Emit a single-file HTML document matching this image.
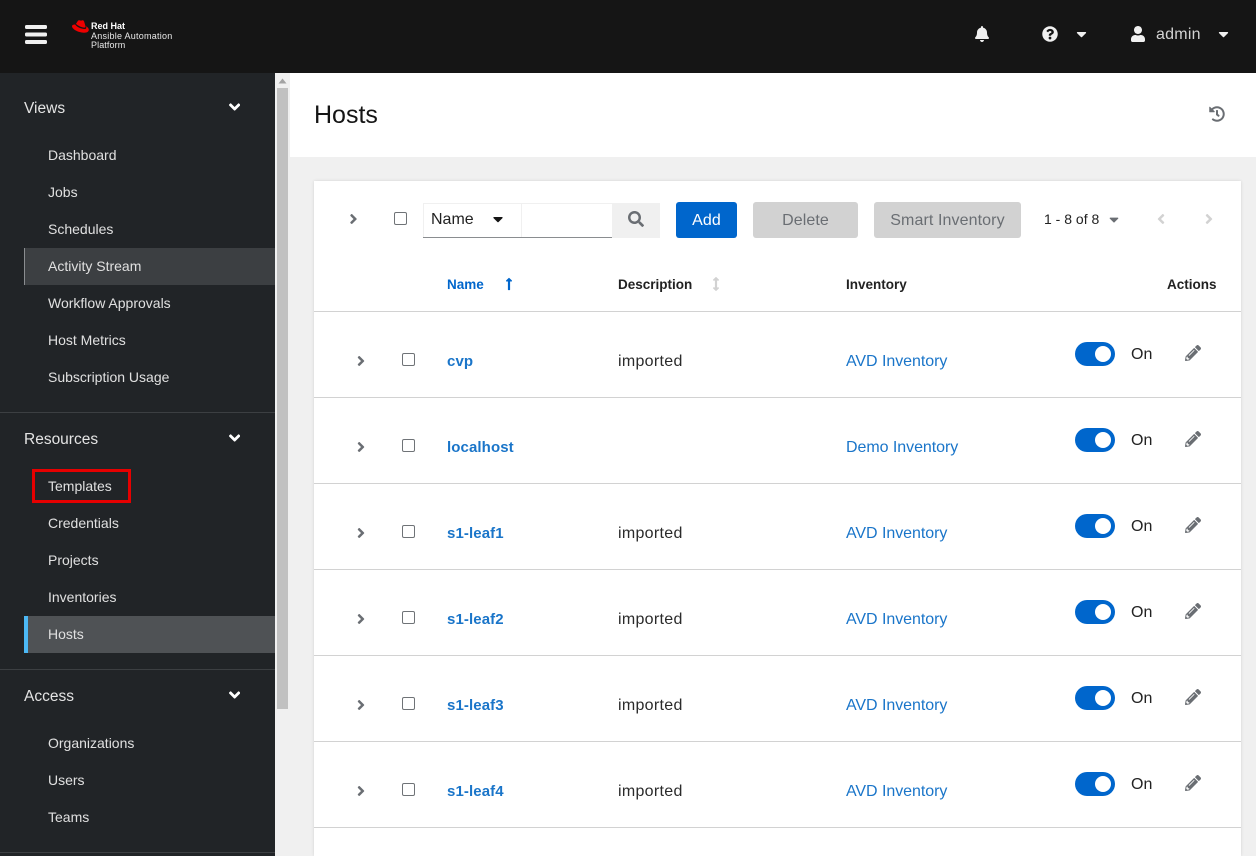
<!DOCTYPE html>
<html lang="en"><head><meta charset="utf-8"><title>Hosts</title>
<style>
html,body{margin:0;padding:0;width:1256px;height:856px;overflow:hidden;background:#f0f0f0}
body{position:relative;font-family:"Liberation Sans",sans-serif;color:#151515}
div,span,a,svg{position:absolute}
.t{white-space:nowrap;height:20px;line-height:20px}
.b{background:#fff}
.n{left:48px;color:#e0e0e0;font-size:14px}
.h{left:24px;color:#e4e4e4;font-size:15.5px}
.hr{left:0;width:275px;height:1px;background:#3c3f42}
.cv{left:229px;width:11.25px;height:18px;fill:#fff}
.row{left:314px;width:927px;height:1px;background:#d2d2d2}
.link{color:#1a75c9;text-decoration:none}
.nm{left:447px;font-size:15px;font-weight:bold;letter-spacing:.1px}
.de{left:618px;font-size:16px;color:#2b2b2b;letter-spacing:.3px}
.in{left:846px;font-size:16px;letter-spacing:-.05px}
.on{left:1131px;font-size:16px;color:#222}
.cb{width:11px;height:11px;border:1px solid #6f7377;border-radius:2px;background:#fff}
.tg{left:1075px;width:40px;height:24px;border-radius:12px;background:#06c}
.tg i{position:absolute;left:20px;top:4px;width:16px;height:16px;border-radius:50%;background:#fff}
.ic{fill:#6a6e73}
.btn{height:36px;top:202px;border-radius:3px;text-align:center;line-height:37px;font-size:16px;letter-spacing:.1px}
.dis{background:#d2d2d2;color:#6a6e73}
.th{top:275px;font-size:13.5px;font-weight:bold;color:#222}
</style></head><body>
<svg width="0" height="0" style="left:0;top:0"><defs>
<symbol id="ar" viewBox="0 0 256 512"><path d="M224.3 273l-136 136c-9.4 9.4-24.6 9.4-33.9 0l-22.6-22.6c-9.4-9.4-9.4-24.6 0-33.9l96.4-96.4-96.4-96.4c-9.4-9.4-9.4-24.6 0-33.9L54.3 103c9.4-9.4 24.6-9.4 33.9 0l136 136c9.5 9.4 9.5 24.6.1 34z"/></symbol>
<symbol id="al" viewBox="0 0 256 512"><path d="M31.7 239l136-136c9.4-9.4 24.6-9.4 33.9 0l22.6 22.6c9.4 9.4 9.4 24.6 0 33.9L127.9 256l96.4 96.4c9.4 9.4 9.4 24.6 0 33.9L201.7 409c-9.4 9.4-24.6 9.4-33.9 0l-136-136c-9.5-9.4-9.5-24.6-.1-34z"/></symbol>
<symbol id="ad" viewBox="0 0 320 512"><path d="M143 352.3L7 216.3c-9.4-9.4-9.4-24.6 0-33.9l22.6-22.6c9.4-9.4 24.6-9.4 33.9 0l96.4 96.4 96.4-96.4c9.4-9.4 24.6-9.4 33.9 0l22.6 22.6c9.4 9.4 9.4 24.6 0 33.9l-136 136c-9.2 9.4-24.4 9.4-33.8 0z"/></symbol>
<symbol id="cd" viewBox="0 0 320 512"><path d="M31.3 192h257.3c17.8 0 26.7 21.5 14.1 34.1L174.1 354.8c-7.8 7.8-20.5 7.8-28.3 0L17.2 226.1C4.6 213.5 13.5 192 31.3 192z"/></symbol>
<symbol id="pe" viewBox="0 0 512 512"><path d="M497.9 142.1l-46.1 46.1c-4.7 4.7-12.3 4.7-17 0l-111-111c-4.7-4.7-4.7-12.3 0-17l46.1-46.1c18.7-18.7 49.1-18.7 67.9 0l60.1 60.1c18.8 18.7 18.8 49.1 0 67.9zM284.2 99.8L21.6 362.4.4 483.9c-2.9 16.4 11.4 30.6 27.8 27.8l121.5-21.3 262.6-262.6c4.7-4.7 4.7-12.3 0-17l-111-111c-4.8-4.7-12.4-4.7-17.1 0zM124.1 339.9c-5.5-5.5-5.5-14.3 0-19.8l154-154c5.5-5.5 14.3-5.5 19.8 0s5.5 14.3 0 19.8l-154 154c-5.5 5.5-14.3 5.5-19.8 0zM88 424h48v36.3l-64.5 11.3-31.1-31.1L51.7 376H88v48z"/></symbol>
</defs></svg>

<!-- top bar -->
<div style="left:0;top:0;width:1256px;height:73px;background:#151515"></div>
<svg style="left:25px;top:25px" width="22" height="19" fill="#f0f0f0"><rect width="22" height="4" y="0" rx="1.5"/><rect width="22" height="4" y="7.5" rx="1.5"/><rect width="22" height="4" y="15" rx="1.5"/></svg>
<svg style="left:72px;top:19px" width="17" height="14" viewBox="0 0 17 14" fill="#e00"><path d="M4 4.800C5.500 6.800 10 8.700 12.500 8.600 13.800 8.600 13.600 7.500 13.300 6.500L12.100 2.500C11.600 1 10.500 .9 9 1.700 7.500 .9 6 1 5.500 2.500z"/><path d="M3.200 5.500C1.500 5.500 0 6 0 7.300 0 10 6 13.700 12 13.700 15.400 13.700 16.800 12.300 16.800 10.700 16.800 9.300 15.700 8 14 7.200 14.500 8.500 14.500 10 12.800 10 9.500 10 4.500 8 3.200 5.500z"/></svg>
<span class="t" style="left:91px;top:16px;font-size:9px;font-weight:bold;color:#fff">Red Hat</span>
<span class="t" style="left:91px;top:26px;font-size:9px;color:#e8e8e8;letter-spacing:.25px">Ansible Automation</span>
<span class="t" style="left:91px;top:35px;font-size:9px;color:#e8e8e8;letter-spacing:.1px">Platform</span>
<svg style="left:975px;top:26px" width="14" height="16" viewBox="0 0 448 512" fill="#f0f0f0"><path d="M224 512c35.32 0 63.97-28.65 63.97-64H160.03c0 35.35 28.65 64 63.97 64zm215.39-149.71c-19.32-20.76-55.47-51.99-55.47-154.29 0-77.7-54.48-139.9-127.94-155.16V32c0-17.67-14.32-32-31.98-32s-31.98 14.33-31.98 32v20.84C118.56 68.1 64.08 130.3 64.08 208c0 102.3-36.15 133.53-55.47 154.29-6 6.45-8.66 14.16-8.61 21.71.11 16.4 12.98 32 32.1 32h383.8c19.12 0 32-15.6 32.1-32 .05-7.55-2.61-15.27-8.61-21.71z"/></svg>
<svg style="left:1042px;top:26px" width="16" height="16" viewBox="0 0 512 512" fill="#f0f0f0"><path d="M504 256c0 136.997-111.043 248-248 248S8 392.997 8 256C8 119.083 119.043 8 256 8s248 111.083 248 248zM262.655 90c-54.497 0-89.255 22.957-116.549 63.758-3.536 5.286-2.353 12.415 2.715 16.258l34.699 26.31c5.205 3.947 12.621 3.008 16.665-2.122 17.864-22.658 30.113-35.797 57.303-35.797 20.429 0 45.698 13.148 45.698 32.958 0 14.976-12.363 22.667-32.534 33.976C247.128 238.528 216 254.941 216 296v4c0 6.627 5.373 12 12 12h56c6.627 0 12-5.373 12-12v-1.333c0-28.462 83.186-29.647 83.186-106.667 0-58.002-60.165-102-116.531-102zM256 338c-25.365 0-46 20.635-46 46 0 25.364 20.635 46 46 46s46-20.636 46-46c0-25.365-20.635-46-46-46z"/></svg>
<svg style="left:1076px;top:26px" width="11" height="16" fill="#f0f0f0"><use href="#cd"/></svg>
<svg style="left:1131px;top:26px" width="14" height="16" viewBox="0 0 448 512" fill="#f0f0f0"><path d="M224 256c70.7 0 128-57.3 128-128S294.7 0 224 0 96 57.3 96 128s57.3 128 128 128zm89.600 32h-16.700c-22.200 10.200-46.900 16-72.900 16s-50.600-5.800-72.900-16h-16.700C60.200 288 0 348.200 0 422.400V464c0 26.500 21.500 48 48 48h352c26.500 0 48-21.500 48-48v-41.600c0-74.200-60.200-134.400-134.400-134.400z"/></svg>
<span class="t" style="left:1156px;top:25px;font-size:16px;color:#d2d2d2;letter-spacing:.25px">admin</span>
<svg style="left:1218px;top:26px" width="11" height="16" fill="#f0f0f0"><use href="#cd"/></svg>

<!-- sidebar -->
<div style="left:0;top:73px;width:275px;height:783px;background:#212427"></div>
<div style="left:277px;top:88px;width:11px;height:621px;background:#c1c1c1"></div>
<svg style="left:277px;top:76px" width="11" height="10"><path d="M5.500 2.500L9.500 7.500H1.500z" fill="#a3a3a3"/></svg>
<span class="t h" style="top:99px">Views</span>
<svg class="cv" style="top:98px"><use href="#ad"/></svg>
<span class="t n" style="top:145px">Dashboard</span>
<span class="t n" style="top:182px">Jobs</span>
<span class="t n" style="top:219px">Schedules</span>
<div style="left:24px;top:248px;width:251px;height:37px;background:#3c3f42"></div>
<div style="left:24px;top:248px;width:1px;height:37px;background:#8a8d90"></div>
<span class="t n" style="top:256px">Activity Stream</span>
<span class="t n" style="top:293px">Workflow Approvals</span>
<span class="t n" style="top:330px">Host Metrics</span>
<span class="t n" style="top:367px">Subscription Usage</span>
<div class="hr" style="top:412px"></div>
<span class="t h" style="top:430px">Resources</span>
<svg class="cv" style="top:429px"><use href="#ad"/></svg>
<span class="t n" style="top:476px">Templates</span>
<div style="left:32px;top:469px;width:93px;height:28px;border:3px solid #e60000"></div>
<span class="t n" style="top:513px">Credentials</span>
<span class="t n" style="top:550px">Projects</span>
<span class="t n" style="top:587px">Inventories</span>
<div style="left:24px;top:616px;width:251px;height:37px;background:#4f5255"></div>
<div style="left:24px;top:616px;width:4px;height:37px;background:#4cb8f5"></div>
<span class="t n" style="top:624px">Hosts</span>
<div class="hr" style="top:669px"></div>
<span class="t h" style="top:687px">Access</span>
<svg class="cv" style="top:686px"><use href="#ad"/></svg>
<span class="t n" style="top:733px">Organizations</span>
<span class="t n" style="top:770px">Users</span>
<span class="t n" style="top:807px">Teams</span>
<div class="hr" style="top:852px"></div>

<!-- header -->
<div class="b" style="left:290px;top:73px;width:966px;height:84px"></div>
<span class="t" style="left:314px;top:101px;height:28px;line-height:28px;font-size:25px">Hosts</span>
<svg style="left:1209px;top:106px" width="16" height="16" viewBox="0 0 512 512" fill="#6a6e73"><path d="M504 255.531c.253 136.64-111.18 248.372-247.82 248.468-59.015.042-113.223-20.53-155.822-54.911-11.077-8.94-11.905-25.541-1.839-35.607l11.267-11.267c8.609-8.609 22.353-9.551 31.891-1.984C173.062 425.135 212.781 440 256 440c101.705 0 184-82.311 184-184 0-101.705-82.311-184-184-184-48.814 0-93.149 18.969-126.068 49.932l50.754 50.754c10.08 10.08 2.941 27.314-11.313 27.314H24c-8.837 0-16-7.163-16-16V38.627c0-14.254 17.234-21.393 27.314-11.314l49.372 49.372C129.209 34.136 189.552 8 256 8c136.81 0 247.747 110.78 248 247.531zm-180.912 78.784l9.823-12.63c8.138-10.463 6.253-25.542-4.21-33.679L288 256.349V152c0-13.255-10.745-24-24-24h-16c-13.255 0-24 10.745-24 24v135.651l65.409 50.874c10.463 8.137 25.541 6.253 33.679-4.21z"/></svg>

<!-- card -->
<div class="b" style="left:314px;top:181px;width:927px;height:675px;box-shadow:0 0 3px rgba(3,3,3,.12)"></div>
<svg class="ic" style="left:349px;top:211px" width="9" height="16"><use href="#ar"/></svg>
<div class="cb" style="left:394px;top:212px"></div>
<div style="left:423px;top:203px;width:99px;height:34px;border:solid #f0f0f0;border-width:1px 1px 0 1px;box-sizing:border-box"></div>
<div style="left:423px;top:237px;width:189px;height:1px;background:#8a8d90"></div>
<div style="left:521px;top:203px;width:91px;height:1px;background:#f0f0f0"></div>
<span class="t" style="left:431px;top:210px;font-size:16px;color:#222">Name</span>
<svg style="left:492px;top:211px" width="12" height="16" fill="#151515"><use href="#cd"/></svg>
<div style="left:612px;top:203px;width:48px;height:35px;background:#f0f0f0"></div>
<svg style="left:628px;top:211px" width="16" height="16" viewBox="0 0 512 512" fill="#6a6e73"><path d="M505 442.700L405.300 343c-4.500-4.500-10.600-7-17-7H372c27.600-35.300 44-79.700 44-128C416 93.100 322.900 0 208 0S0 93.100 0 208s93.100 208 208 208c48.300 0 92.700-16.400 128-44v16.300c0 6.400 2.500 12.500 7 17l99.700 99.700c9.400 9.400 24.600 9.400 33.900 0l28.300-28.300c9.400-9.400 9.400-24.600.1-34zM208 336c-70.700 0-128-57.200-128-128 0-70.700 57.200-128 128-128 70.700 0 128 57.200 128 128 0 70.700-57.200 128-128 128z"/></svg>
<div class="btn" style="left:676px;width:61px;background:#06c;color:#fff">Add</div>
<div class="btn dis" style="left:753px;width:105px">Delete</div>
<div class="btn dis" style="left:874px;width:147px">Smart Inventory</div>
<span class="t" style="left:1044px;top:209px;font-size:14px;color:#222"><b style="font-weight:normal">1 - 8</b> of <b style="font-weight:normal">8</b></span>
<svg style="left:1109px;top:212px" width="10" height="15" fill="#6a6e73"><use href="#cd"/></svg>
<svg style="left:1157px;top:211px" width="8" height="16" fill="#d2d2d2"><use href="#al"/></svg>
<svg style="left:1205px;top:211px" width="8" height="16" fill="#d2d2d2"><use href="#ar"/></svg>

<span class="t th" style="left:447px;color:#06c">Name</span>
<svg style="left:504px;top:277px" width="10" height="14" viewBox="0 0 256 512" fill="#06c"><path d="M88 166.059V468c0 6.627 5.373 12 12 12h56c6.627 0 12-5.373 12-12V166.059h46.059c21.382 0 32.09-25.851 16.971-40.971l-86.059-86.059c-9.373-9.373-24.569-9.373-33.941 0l-86.059 86.059c-15.119 15.119-4.411 40.971 16.971 40.971H88z"/></svg>
<span class="t th" style="left:618px">Description</span>
<svg style="left:711px;top:277px" width="10" height="14" viewBox="0 0 256 512" fill="#d2d2d2"><path d="M214.059 377.941H168V134.059h46.059c21.382 0 32.09-25.851 16.971-40.971L144.971 7.029c-9.373-9.373-24.569-9.373-33.941 0L24.971 93.088c-15.119 15.119-4.411 40.971 16.971 40.971H88v243.882H41.941c-21.382 0-32.09 25.851-16.971 40.971l86.059 86.059c9.373 9.373 24.569 9.373 33.941 0l86.059-86.059c15.12-15.119 4.412-40.971-16.972-40.971z"/></svg>
<span class="t th" style="left:846px">Inventory</span>
<span class="t th" style="left:1167px">Actions</span>
<div class="row" style="top:311px"></div>

<!-- row 1 -->
<svg class="ic" style="left:357px;top:353px" width="8" height="16"><use href="#ar"/></svg>
<div class="cb" style="left:402px;top:353px"></div>
<a class="t nm link" style="top:352px">cvp</a>
<span class="t de" style="top:352px">imported</span>
<a class="t in link" style="top:352px">AVD Inventory</a>
<div class="tg" style="top:342px"><i></i></div>
<span class="t on" style="top:345px">On</span>
<svg class="ic" style="left:1185px;top:345px" width="16" height="16"><use href="#pe"/></svg>
<div class="row" style="top:397px"></div>

<!-- row 2 -->
<svg class="ic" style="left:357px;top:439px" width="8" height="16"><use href="#ar"/></svg>
<div class="cb" style="left:402px;top:439px"></div>
<a class="t nm link" style="top:438px">localhost</a>
<a class="t in link" style="top:438px">Demo Inventory</a>
<div class="tg" style="top:428px"><i></i></div>
<span class="t on" style="top:431px">On</span>
<svg class="ic" style="left:1185px;top:431px" width="16" height="16"><use href="#pe"/></svg>
<div class="row" style="top:483px"></div>

<!-- row 3 -->
<svg class="ic" style="left:357px;top:525px" width="8" height="16"><use href="#ar"/></svg>
<div class="cb" style="left:402px;top:525px"></div>
<a class="t nm link" style="top:524px">s1-leaf1</a>
<span class="t de" style="top:524px">imported</span>
<a class="t in link" style="top:524px">AVD Inventory</a>
<div class="tg" style="top:514px"><i></i></div>
<span class="t on" style="top:517px">On</span>
<svg class="ic" style="left:1185px;top:517px" width="16" height="16"><use href="#pe"/></svg>
<div class="row" style="top:569px"></div>

<!-- row 4 -->
<svg class="ic" style="left:357px;top:611px" width="8" height="16"><use href="#ar"/></svg>
<div class="cb" style="left:402px;top:611px"></div>
<a class="t nm link" style="top:610px">s1-leaf2</a>
<span class="t de" style="top:610px">imported</span>
<a class="t in link" style="top:610px">AVD Inventory</a>
<div class="tg" style="top:600px"><i></i></div>
<span class="t on" style="top:603px">On</span>
<svg class="ic" style="left:1185px;top:603px" width="16" height="16"><use href="#pe"/></svg>
<div class="row" style="top:655px"></div>

<!-- row 5 -->
<svg class="ic" style="left:357px;top:697px" width="8" height="16"><use href="#ar"/></svg>
<div class="cb" style="left:402px;top:697px"></div>
<a class="t nm link" style="top:696px">s1-leaf3</a>
<span class="t de" style="top:696px">imported</span>
<a class="t in link" style="top:696px">AVD Inventory</a>
<div class="tg" style="top:686px"><i></i></div>
<span class="t on" style="top:689px">On</span>
<svg class="ic" style="left:1185px;top:689px" width="16" height="16"><use href="#pe"/></svg>
<div class="row" style="top:741px"></div>

<!-- row 6 -->
<svg class="ic" style="left:357px;top:783px" width="8" height="16"><use href="#ar"/></svg>
<div class="cb" style="left:402px;top:783px"></div>
<a class="t nm link" style="top:782px">s1-leaf4</a>
<span class="t de" style="top:782px">imported</span>
<a class="t in link" style="top:782px">AVD Inventory</a>
<div class="tg" style="top:772px"><i></i></div>
<span class="t on" style="top:775px">On</span>
<svg class="ic" style="left:1185px;top:775px" width="16" height="16"><use href="#pe"/></svg>
<div class="row" style="top:827px"></div>
</body></html>
